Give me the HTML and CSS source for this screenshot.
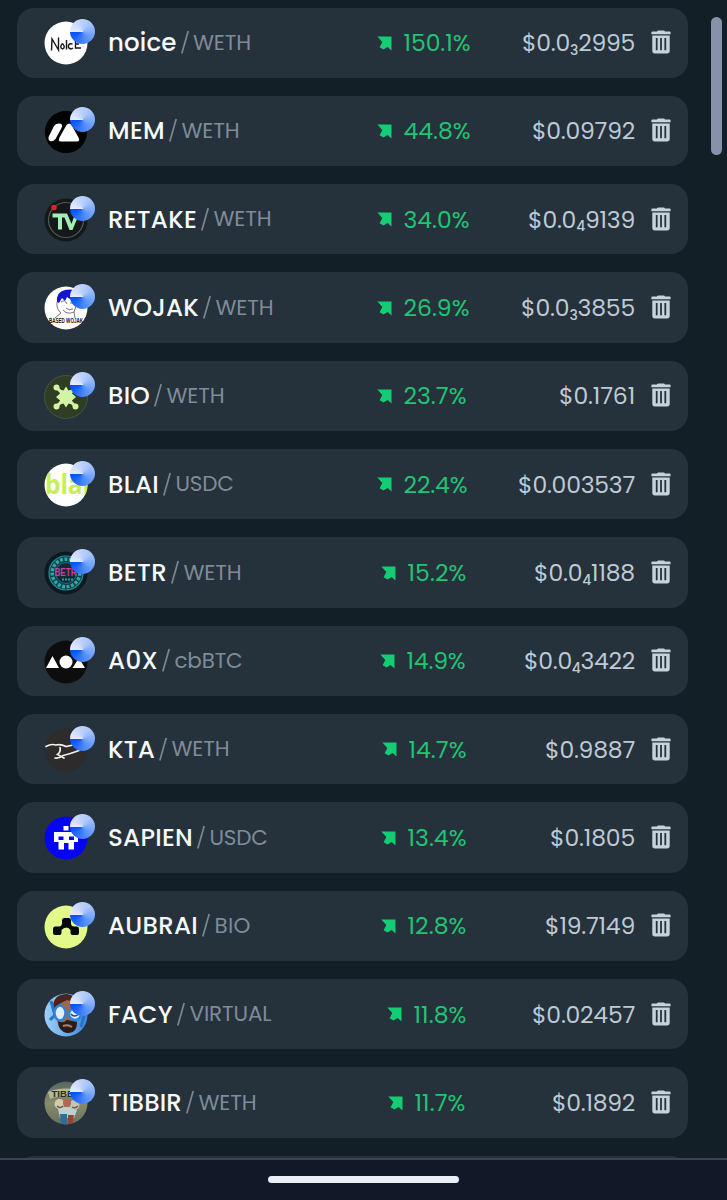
FILE: index.html
```html
<!DOCTYPE html>
<html lang="en">
<head>
<meta charset="utf-8">
<title>Watchlist</title>
<link rel="stylesheet" href="styles.css">
</head>
<body>
<svg class="defs" width="0" height="0">
  <defs>
    <clipPath id="disc"><circle cx="23" cy="24" r="21.5"/></clipPath>
    <linearGradient id="sky" x1="0" x2="1"><stop offset="0" stop-color="#9fd0f8"/><stop offset="1" stop-color="#3d86d8"/></linearGradient>
    <linearGradient id="field" x1="0" x2="0" y1="0" y2="1"><stop offset="0" stop-color="#566560"/><stop offset=".5" stop-color="#888c6c"/><stop offset="1" stop-color="#66715a"/></linearGradient>
    <symbol id="arrow" viewBox="0 0 15 15"><path d="M.3 .5H14.500V14.500L10.600 11 6.500 13.600 2.600 11.300 5.300 6z"/></symbol>
    <symbol id="trash" viewBox="0 0 20 24"><path fill-rule="evenodd" d="M6 1.6Q6.3 .5 7.4 .5H12.6Q13.7 .5 14 1.6H18.6Q19.6 1.6 19.6 2.6V4.3H.4V2.6Q.4 1.6 1.4 1.6zM1.3 5.5H18.7V20.8Q18.7 23.5 16 23.5H4Q1.3 23.5 1.3 20.8zM4.8 8V20.3H6.6V8zM9.1 8V20.3H10.9V8zM13.4 8V20.3H15.2V8z"/></symbol>
    <symbol id="noice" viewBox="0 0 54 48"><circle cx="23" cy="24" r="21.5" fill="#fff"/><path d="M8.500 31.500L9 20 15.500 31V18.500M19.500 24.500Q16 28 19.500 30 23 28 19.500 24.500M23.500 21V30.500M29.500 25Q24.500 24 25.500 28.500 27.500 31 30 29M37 19.500L32.500 22V29H38M32.500 25H36" fill="none" stroke="#181818" stroke-width="1.400"/></symbol>
    <symbol id="mem" viewBox="0 0 54 48"><circle cx="23" cy="24" r="21.500" fill="#020303" stroke="#353c40" stroke-width=".6"/><path d="M11 18Q13 15 16.500 15.500 20.500 16 18.500 20L12.500 31Q10 34 7 33 4.500 31.500 6 28zM23.500 17Q26 14 28.500 17L35.500 29.500Q37.500 33.500 33.500 33.500H18Q14.500 33.500 16.500 29.500z" fill="#fff"/></symbol>
    <symbol id="retake" viewBox="0 0 54 48"><circle cx="23" cy="24" r="21.500" fill="#141819"/><circle cx="23" cy="24" r="17.500" fill="none" stroke="#50585a" stroke-width="1.200"/><circle cx="11" cy="11.500" r="2.800" fill="#ed1b24"/><path d="M9.500 17.500H24L28.500 28 32 18H36L29.500 34H26.500L21.500 21.500H19V33.500H15V21.500H9.500z" fill="#a3edb5"/></symbol>
    <symbol id="wojak" viewBox="0 0 54 48"><circle cx="23" cy="24" r="21.500" fill="#fff"/><path d="M14 18Q13 8 22 6 33 4 36 11L31 12 30 17 24 13 22 17 19 14 16 19z" fill="#1414c8"/><path d="M14 18Q13 25 18 29L12 34M18 18Q22 15 24 20M27 19H33M20 26Q24 31 31 28L33 22M31 28L32 34M23 24Q26 27 30 25" fill="none" stroke="#555" stroke-width=".8"/><text x="23" y="38.500" textLength="34" lengthAdjust="spacingAndGlyphs" class="tag tag-wojak">BASED WOJAK</text></symbol>
    <symbol id="bio" viewBox="0 0 54 48"><circle cx="23" cy="24" r="21.500" fill="#2e3d24" stroke="#536148" stroke-width=".7"/><path d="M13 14L33 34M33 14L13 34" stroke="#d3f3a5" stroke-width="3"/><g fill="#d3f3a5"><circle cx="13.500" cy="14.500" r="3"/><circle cx="32.500" cy="14.500" r="3"/><circle cx="13.500" cy="33.500" r="3"/><circle cx="32.500" cy="33.500" r="3"/><path d="M23 13.500L25.500 17.500 29.500 16.500 29 20.500 33 24 29 27.500 29.500 31.500 25.500 30.500 23 34.500 20.500 30.500 16.500 31.500 17 27.500 13 24 17 20.500 16.500 16.500 20.500 17.500z"/></g></symbol>
    <symbol id="blai" viewBox="0 0 54 48"><circle cx="23" cy="24" r="21.500" fill="#fff"/><g clip-path="url(#disc)"><text x="24.500" y="32.500" textLength="45" lengthAdjust="spacingAndGlyphs" class="tag tag-blai">blai</text></g></symbol>
    <symbol id="betr" viewBox="0 0 54 48"><circle cx="23" cy="24" r="21.500" fill="#0b1a22"/><circle cx="23" cy="24" r="17" fill="#123c44" stroke="#278d93" stroke-width="1.200"/><circle cx="23" cy="24" r="13.800" fill="none" stroke="#2ba8a8" stroke-width="3.500" stroke-dasharray="3 1.500"/><circle cx="23" cy="24" r="10.500" fill="#102b38" stroke="#237e87" stroke-width=".8"/><text x="22.500" y="27" textLength="22" lengthAdjust="spacingAndGlyphs" class="tag tag-betr">BETR</text><path d="M19 30.500H31" stroke="#249ca2" stroke-width="2" stroke-dasharray="2 1"/></symbol>
    <symbol id="a0x" viewBox="0 0 54 48"><circle cx="23" cy="24" r="21.500" fill="#0d0d0e"/><path d="M9.500 18L16 30H3zM36 20L42 30H29.500z" fill="#fff"/><circle cx="23" cy="24" r="6.500" fill="#fff"/></symbol>
    <symbol id="kta" viewBox="0 0 54 48"><circle cx="23" cy="24" r="21.500" fill="#2d2b2c"/><path d="M3 20.500Q8 17.500 13 19 18 18 23 20.500L30 19M17 21.500Q18 26 14.500 28.500L21 32M12 32Q17 32.500 20 29.500 27 28 36 24.500" fill="none" stroke="#f4f0ec" stroke-width="1.700" stroke-linecap="round"/></symbol>
    <symbol id="sapien" viewBox="0 0 54 48"><circle cx="23" cy="24" r="21.500" fill="#0505f5"/><path fill-rule="evenodd" d="M20.500 12H25.500V16.500H20.500zM11 18H35V28H31V35.500H25.500V29H21V35.500H15.500V28H11zM15.500 22.500V26H20.500V22.500zM26 22.500V26H31V22.500z" fill="#fff"/><path d="M11 23H15V28H11zM31 23H35V28H31z" fill="#fff"/></symbol>
    <symbol id="aubrai" viewBox="0 0 54 48"><circle cx="23" cy="24" r="21.500" fill="#e3fa8b"/><path d="M19 17.500Q19 15 21 15H26Q28 15 28 17.500V21Q28.500 23.500 31 23.500H34Q36 23.500 36 26V30Q36 32 34 32H29.500Q27.500 32 27.500 30V27Q26 24.500 23.500 24.500 20.500 24.500 18.500 27V30Q18.500 32 16.500 32H12Q10 32 10 30V26Q10 23.500 12 23.500H16Q18.500 23.500 19 21z" fill="#050706"/></symbol>
    <symbol id="facy" viewBox="0 0 54 48"><circle cx="23" cy="24" r="21.500" fill="url(#sky)"/><g clip-path="url(#disc)"><path d="M10 14Q12 3 24 4 33 5 35 14L34 35Q31 44 22 41 15 38 13 25z" fill="#9b6750"/><path d="M10 17Q10 3 24 3 32 4 35 12L24 9 16 13 14 23z" fill="#48251f"/><path d="M15 30Q20 33 24 29L34 31Q34 43 24 42 15 40 15 30z" fill="#291c1c"/><path d="M20 35Q25 33 29 36" fill="none" stroke="#b57d6f" stroke-width="2"/><path d="M8 10L12 24 7 29M29 22L42 21 38 36" fill="none" stroke="#2674cc" stroke-width="3"/><ellipse cx="17" cy="22" rx="5.500" ry="7.500" fill="#deedf8" stroke="#3284d6" stroke-width="2.500"/><ellipse cx="32" cy="23" rx="6" ry="6" fill="#e7f1fa" stroke="#3284d6" stroke-width="2.500"/><path d="M28 23Q31 27 36 23" fill="none" stroke="#174d91" stroke-width="1.500"/></g></symbol>
    <symbol id="tibbir" viewBox="0 0 54 48"><circle cx="23" cy="24" r="21.500" fill="url(#field)"/><g clip-path="url(#disc)"><path d="M5 13Q14 8 35 10V18Q15 16 7 20z" fill="#b6ba8e"/><text x="21" y="18" textLength="25" lengthAdjust="spacingAndGlyphs" class="tag tag-tibbir">TIBBI</text><path d="M15 30L24 27 34 31 31 39H17z" fill="#c2cdcf"/><circle cx="16.500" cy="25" r="5" fill="#d2cbb0"/><circle cx="31.500" cy="26" r="5" fill="#c6c5b2"/><circle cx="24" cy="24" r="4" fill="#ae6858"/><path d="M14 27Q17 30 20 27M29 28Q32 30 35 27" fill="none" stroke="#555f60" stroke-width="1.500"/><path d="M17 35H24V47H18z" fill="#2d6d99"/><path d="M25 36H31L29 47H25z" fill="#9d4034"/></g></symbol>
  </defs>
</svg>
<main class="screen">
  <section class="list" id="list"></section>
  <div class="scrollbar"></div>
  <footer class="bottom"><div class="home"></div></footer>
</main>
<script src="app.js"></script>
</body>
</html>
```
FILE: styles.css
```css
body { margin: 0; background: #131f26; }
.defs { position: absolute; }
.screen { position: relative; display: flex; flex-direction: column; height: 1200px; overflow: hidden; font-family: Poppins, Inter, sans-serif; }
.list { box-sizing: border-box; height: 1158px; padding: 7.5px 39px 0 17px; display: flex; flex-direction: column; gap: 18px; overflow: hidden; }
.row { box-sizing: border-box; flex: none; height: 70.330px; border-radius: 17px; background: #25313b; display: grid; grid-template-columns: 65px 256px 126px 1fr 20px; align-items: center; padding: 0 17px 0 26px; }
.avatar { position: relative; width: 54px; height: 48px; display: block; margin-top: 1.500px; }
.avatar svg { display: block; }
.badge { position: absolute; left: 27.300px; top: -.4px; width: 25px; height: 25px; border-radius: 50%; background: conic-gradient(from 270deg, #e4ebff 0deg, #c3d4fb 70deg, #a9c5fb 130deg, #7ba9fb 190deg, #4b88fb 260deg, #0a55fb 345deg, #0751f7 360deg); }
.pair, .change { display: flex; white-space: nowrap; }
.pair { align-items: baseline; margin-top: 2px; }
.name { font-size: 24.500px; line-height: 36px; font-weight: 500; color: #f6f9fb; }
.slash { width: 8px; height: 24px; margin: -3px 4.500px 0 4px; align-self: center; stroke: #7b8794; stroke-width: 1.700; fill: none; }
.quote { position: relative; top: -1.500px; font-size: 21.500px; line-height: 36px; font-weight: 400; color: #7f8b9a; }
.change { align-items: center; color: #20c574; font-size: 23.500px; line-height: 36px; font-weight: 400; margin-top: 1px; }
.arrow { width: 15px; height: 15px; fill: #14cc73; margin-right: 11.500px; }
.price { justify-self: end; margin-right: 16px; margin-top: 1px; white-space: nowrap; color: #bdc9d6; font-size: 23.500px; line-height: 36px; font-weight: 400; }
.price sub { font-size: 14px; line-height: 0; font-weight: 500; vertical-align: baseline; position: relative; top: 3.500px; }
.trash { width: 20px; height: 24px; fill: #c6d2dc; margin-top: -1px; }
.fit { display: inline-block; }
.scrollbar { position: absolute; left: 711px; top: 17px; width: 11px; height: 138px; border-radius: 6px; background: #8792aa; }
.bottom { box-sizing: border-box; height: 42px; border-top: 2px solid #3a444f; background: #111827; display: flex; justify-content: center; padding-top: 15.500px; }
.home { width: 191px; height: 7px; border-radius: 4px; background: #e9eff4; }
.tag { text-anchor: middle; font-family: "Liberation Sans", sans-serif; font-weight: 700; }
.tag-wojak { font-size: 7px; fill: #151515; }
.tag-blai { font-family: "Open Sans", sans-serif; font-size: 26px; fill: #c5ee58; }
.tag-betr { font-size: 10px; fill: #d6399c; }
.tag-tibbir { font-size: 9px; fill: #252d24; }
```
FILE: app.js
```js
// symbol, name, name width, quote, quote width, change, change width, arrow inset, price, price width
const rows = [
  ['noice', 'noice', 67.5, 'WETH', 57, '150.1%', 66, 12, '$0.0<sub>3</sub>2995', 112],
  ['mem', 'MEM', 56, 'WETH', 57, '44.8%', 66, 12, '$0.09792', 102],
  ['retake', 'RETAKE', 88, 'WETH', 57, '34.0%', 65, 12, '$0.0<sub>4</sub>9139', 106],
  ['wojak', 'WOJAK', 90, 'WETH', 57, '26.9%', 65, 12, '$0.0<sub>3</sub>3855', 113],
  ['bio', 'BIO', 41, 'WETH', 57, '23.7%', 62, 12, '$0.1761', 75],
  ['blai', 'BLAI', 50, 'USDC', 57, '22.4%', 63, 12, '$0.003537', 116],
  ['betr', 'BETR', 58, 'WETH', 57, '15.2%', 58, 16, '$0.0<sub>4</sub>1188', 100],
  ['a0x', 'A0X', 49, 'cbBTC', 67, '14.9%', 58, 15, '$0.0<sub>4</sub>3422', 110],
  ['kta', 'KTA', 46, 'WETH', 57, '14.7%', 57, 17, '$0.9887', 89],
  ['sapien', 'SAPIEN', 84, 'USDC', 57, '13.4%', 58, 16, '$0.1805', 84],
  ['aubrai', 'AUBRAI', 89, 'BIO', 35, '12.8%', 58, 16, '$19.7149', 89],
  ['facy', 'FACY', 64, 'VIRTUAL', 81, '11.8%', 52, 22, '$0.02457', 102],
  ['tibbir', 'TIBBIR', 73, 'WETH', 57, '11.7%', 50, 23, '$0.1892', 82]
];

const list = document.getElementById('list');
list.innerHTML = rows.map(([id, name, nw, quote, qw, change, cw, inset, price, pw]) => `
  <article class="row">
    <div class="avatar"><svg width="54" height="48"><use href="#${id}"/></svg><span class="badge"></span></div>
    <div class="pair"><span class="name fit" data-width="${nw}">${name}</span><svg class="slash"><path d="M.8 23.500L7.200 1"/></svg><span class="quote fit" data-width="${qw}">${quote}</span></div>
    <div class="change" style="padding-left:${inset + 1}px"><svg class="arrow"><use href="#arrow"/></svg><span class="fit" data-width="${cw}">${change}</span></div>
    <div class="price fit" data-width="${pw}">${price}</div>
    <svg class="trash"><use href="#trash"/></svg>
  </article>`).join('') + '<article class="row"></article>';

// Track each label so its column measure stays constant across fonts.
document.querySelectorAll('.fit').forEach(el => {
  const target = Number(el.dataset.width) + 1;
  const spacing = (target - el.getBoundingClientRect().width) / el.textContent.length;
  el.style.letterSpacing = spacing + 'px';
});
```
